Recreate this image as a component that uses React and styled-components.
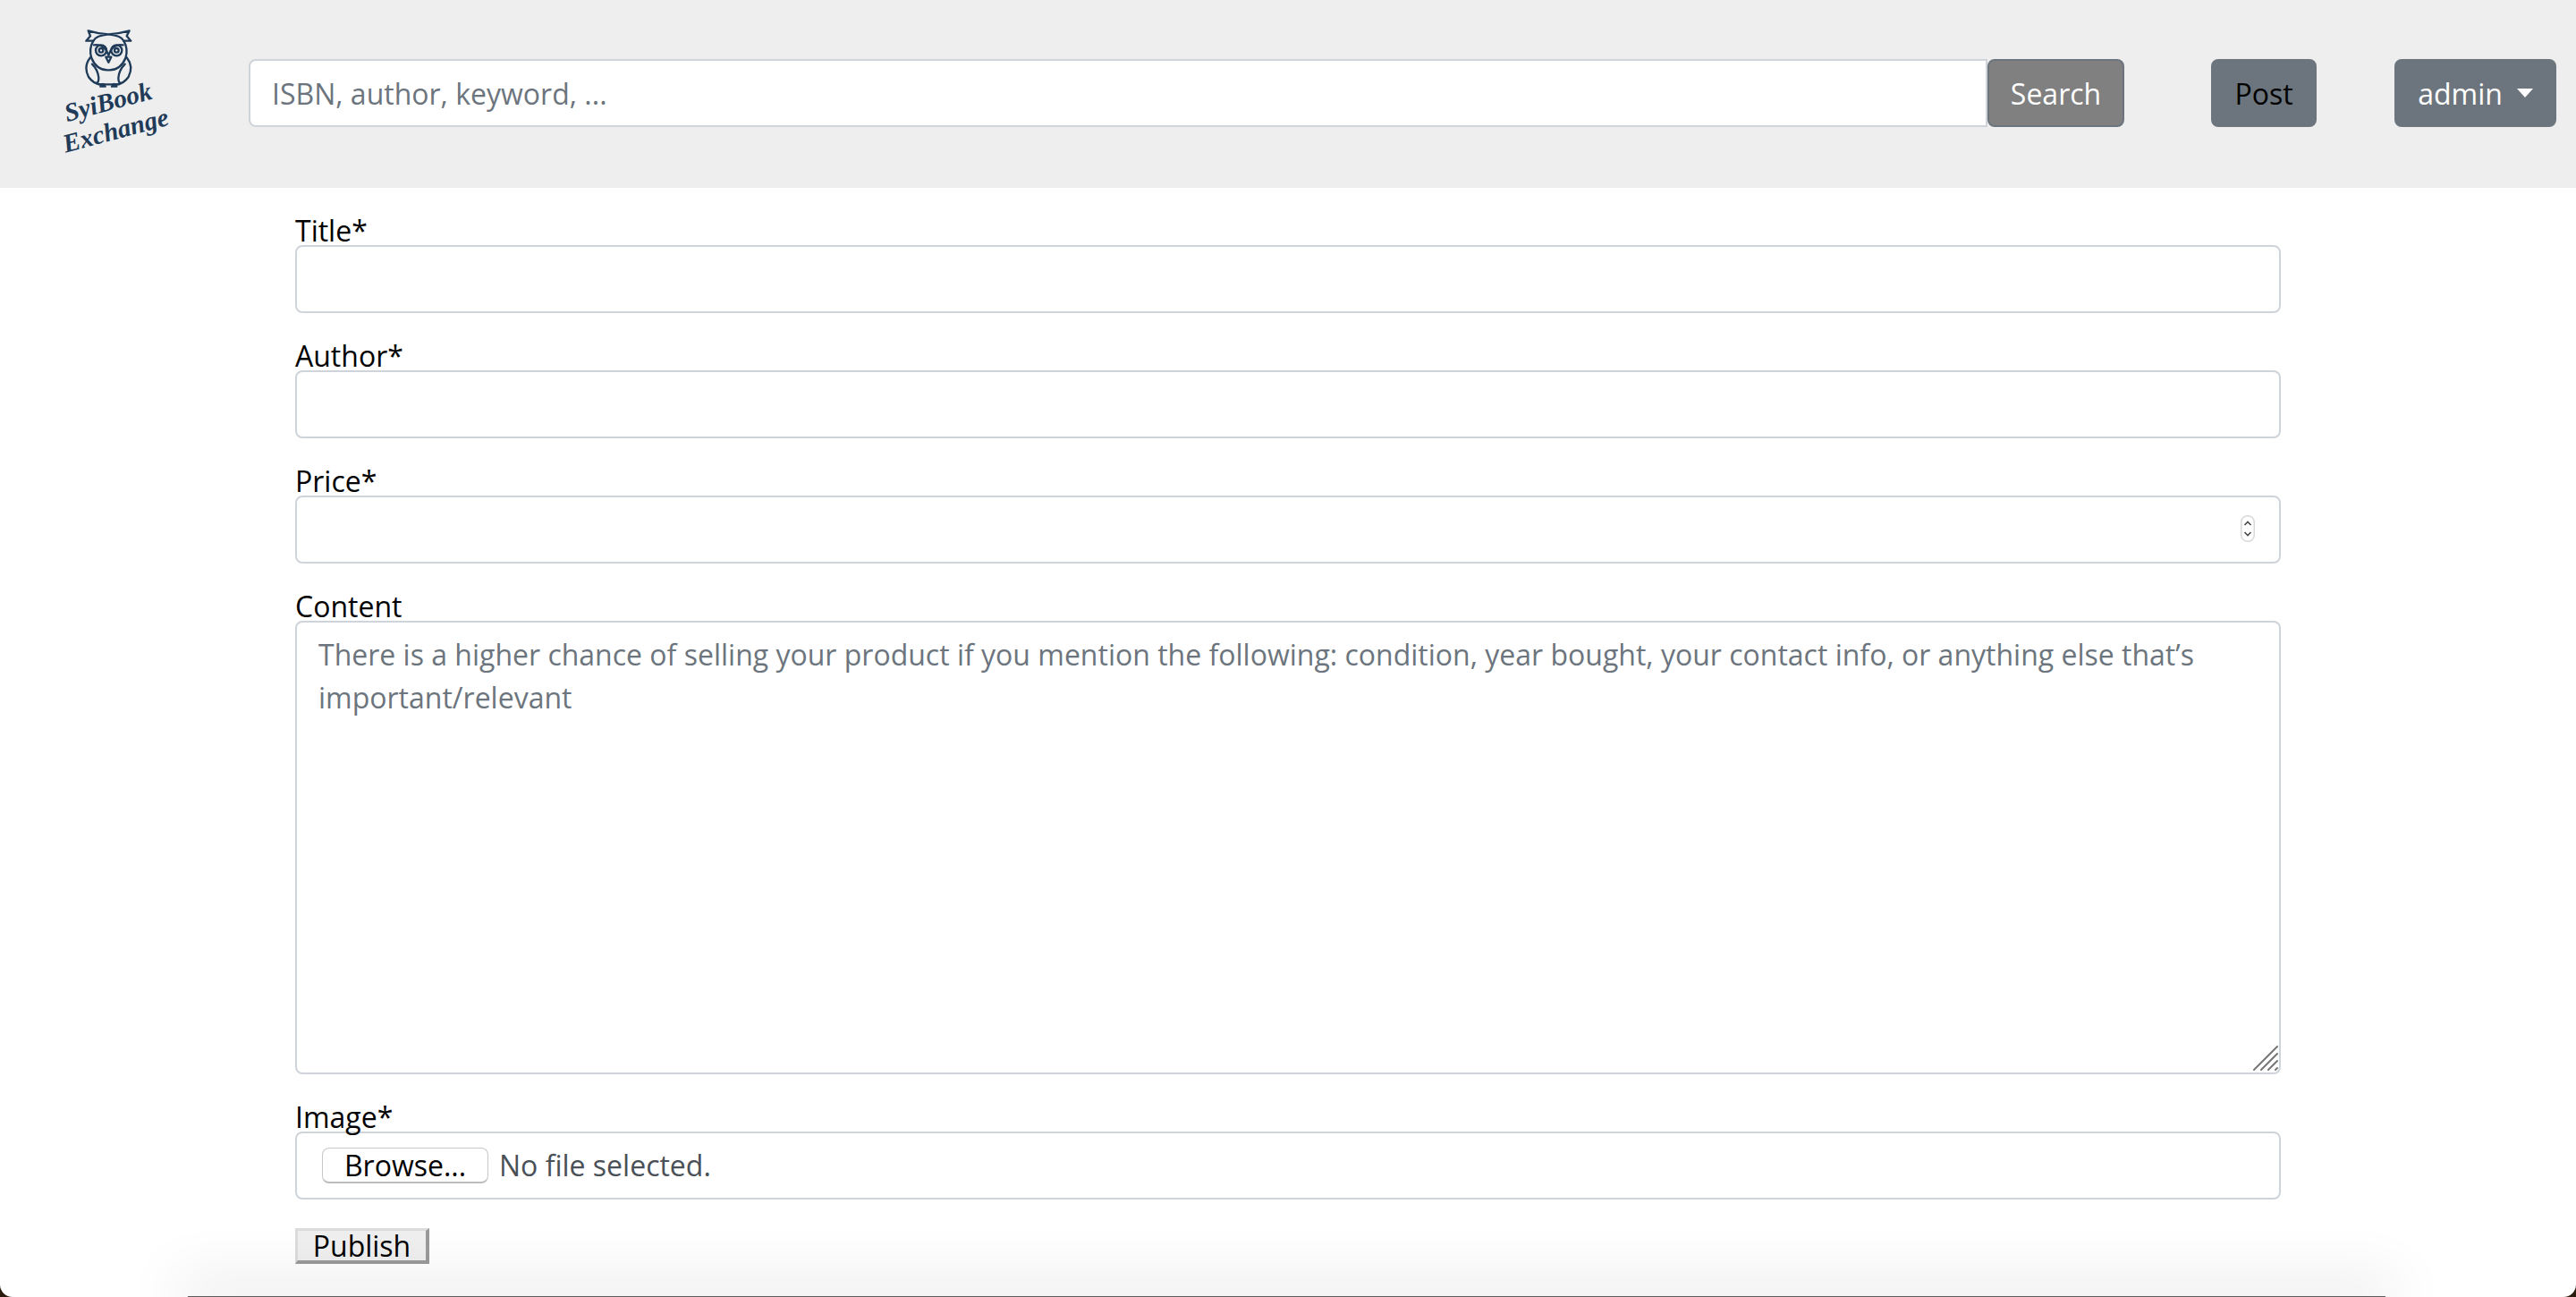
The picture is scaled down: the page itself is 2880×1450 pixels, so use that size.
import React from "react";
import styled, { createGlobalStyle } from "styled-components";

const Global = createGlobalStyle`
  html, body { margin: 0; padding: 0; background: #2b1c10; }
  body { font-family: "Open Sans", "Noto Sans", sans-serif; font-size: 32px; color: #000; }
  * { box-sizing: border-box; }
`;

const Page = styled.div`
  position: relative;
  height: 1450px;
  background: #fff;
  overflow: hidden;
  border-radius: 0 0 14px 14px;
`;

const Nav = styled.nav`
  display: flex;
  align-items: center;
  height: 210px;
  padding-bottom: 2px;
  background: #eee;
`;

const Brand = styled.div`
  width: 278px;
  height: 208px;
  flex: none;
  display: flex;
  flex-direction: column;
  padding: 31px 0 0 93px;
`;

const Owl = styled.svg`
  width: 60px;
  height: 70px;
  display: block;
  flex: none;
`;

const Wordmark = styled.div`
  width: 130px;
  margin: -4px 0 0 -33px;
  transform: rotate(-15deg);
  font-family: "Liberation Serif", serif;
  font-style: italic;
  font-weight: 700;
  font-size: 29px;
  line-height: 33px;
  text-align: center;
  color: #1f3b58;
  white-space: nowrap;
`;

const SearchInput = styled.input`
  width: 1944px;
  height: 76px;
  flex: none;
  padding: 0 24px;
  font: inherit;
  background: #fff;
  border: 2px solid #ced4da;
  border-radius: 8px 0 0 8px;
  outline: none;
  &::placeholder { color: #6c757d; opacity: 1; }
`;

const NavButton = styled.button`
  height: 76px;
  width: ${(p) => p.$w}px;
  margin-left: ${(p) => p.$ml || 0}px;
  flex: none;
  padding: 0;
  font: inherit;
  color: ${(p) => p.$fg};
  background: ${(p) => p.$bg};
  border: 2px solid #6c757d;
  border-radius: 8px;
  display: flex;
  align-items: center;
  justify-content: center;
`;

const Caret = styled.span`
  width: 0;
  height: 0;
  margin-left: 16px;
  border-top: 10px solid #fff;
  border-left: 9px solid transparent;
  border-right: 9px solid transparent;
`;

const Form = styled.form`
  width: 2220px;
  margin-left: 330px;
  padding-top: 32px;
`;

const Group = styled.div`
  margin-bottom: 32px;
`;

const Label = styled.label`
  display: block;
  height: 32px;
  line-height: 32px;
  white-space: nowrap;
`;

const FieldWrap = styled.div`
  position: relative;
`;

const Input = styled.input`
  display: block;
  width: 100%;
  height: 76px;
  padding: 0 24px;
  font: inherit;
  background: #fff;
  border: 2px solid #ced4da;
  border-radius: 8px;
  outline: none;
`;

const Spinner = styled.svg`
  position: absolute;
  right: 29px;
  top: 22px;
  width: 16px;
  height: 30px;
`;

const Textarea = styled.textarea`
  display: block;
  width: 100%;
  height: 507px;
  padding: 12px 24px;
  font: inherit;
  line-height: 48px;
  background: #fff;
  border: 2px solid #ced4da;
  border-radius: 8px;
  outline: none;
  resize: none;
  &::placeholder { color: #6c757d; opacity: 1; }
`;

const Grip = styled.svg`
  position: absolute;
  right: 3px;
  bottom: 4px;
  width: 28px;
  height: 28px;
`;

const FileBox = styled.div`
  display: flex;
  align-items: center;
  height: 76px;
  padding: 0 26px 2px 28px;
  border: 2px solid #ced4da;
  border-radius: 8px;
  color: #495057;
`;

const BrowseButton = styled.button`
  width: 186px;
  height: 40px;
  padding: 0;
  margin: 2px 12px 0 0;
  font: inherit;
  line-height: 36px;
  color: #000;
  background: #fff;
  border: 1px solid #c8c8c8;
  border-bottom: 2px solid #bcbcbc;
  border-radius: 8px;
`;

const Publish = styled.button`
  display: block;
  width: 150px;
  height: 40px;
  padding: 0;
  font: inherit;
  line-height: 32px;
  color: #000;
  background: #efefef;
  border-style: solid;
  border-width: 3px 4px 4px 3px;
  border-color: #dcdcdc #9a9a9a #9a9a9a #dcdcdc;
`;

const BottomEdge = styled.div`
  position: absolute;
  left: 210px;
  right: 213px;
  bottom: 0;
  height: 1px;
  background: #5a5a5a;
  box-shadow: 0 -4px 64px 12px rgba(0, 0, 0, 0.13);
`;

const OwlMark = () => (
  <Owl viewBox="0 0 180 210" fill="none" stroke="#1f3b58" strokeWidth="7" strokeLinecap="round" strokeLinejoin="round">
    <path d="M17 10 Q50 20 85 22 Q120 20 155 10 L146 28 L160 44 L136 44 Q128 26 85 22 Q42 26 34 44 L10 44 L24 28 Z" />
    <path d="M34 44 Q18 72 28 102 Q46 144 85 142 Q124 144 142 102 Q152 72 136 44" />
    <path d="M85 92 Q72 52 36 58" />
    <path d="M85 92 Q98 52 134 58" />
    <circle cx="60" cy="76" r="18" />
    <circle cx="60" cy="76" r="7" />
    <circle cx="112" cy="76" r="18" />
    <circle cx="112" cy="76" r="7" />
    <path d="M76 98 L94 98 L85 116 Z" />
    <path d="M24 100 Q0 130 18 165 Q34 188 58 190" />
    <path d="M146 100 Q170 130 152 165 Q136 188 112 190" />
    <path d="M30 122 Q50 142 52 168 Q52 184 44 186 M140 122 Q120 142 118 168 Q118 184 126 186" />
    <path d="M52 190 L120 190" />
    <path d="M58 197 Q66 181 74 197 Z M96 197 Q104 181 112 197 Z" />
  </Owl>
);

export default function App() {
  return (
    <Page>
      <Global />
      <Nav>
        <Brand>
          <OwlMark />
          <Wordmark>
            <div>SyiBook</div>
            <div>Exchange</div>
          </Wordmark>
        </Brand>
        <SearchInput placeholder="ISBN, author, keyword, ..." />
        <NavButton $w={153} $bg="#808080" $fg="#fff">Search</NavButton>
        <NavButton $w={118} $ml={97} $bg="#6c757d" $fg="#000">Post</NavButton>
        <NavButton $w={181} $ml={87} $bg="#6c757d" $fg="#fff">admin<Caret /></NavButton>
      </Nav>
      <Form>
        <Group>
          <Label>Title*</Label>
          <Input />
        </Group>
        <Group>
          <Label>Author*</Label>
          <Input />
        </Group>
        <Group>
          <Label>Price*</Label>
          <FieldWrap>
            <Input />
            <Spinner viewBox="0 0 16 30" fill="none">
              <rect x="0.75" y="0.75" width="14.5" height="28.5" rx="7" fill="#fff" stroke="#d8d8d8" strokeWidth="1.5" />
              <path d="M4.5 11 L8 7.5 L11.5 11 M4.5 19 L8 22.5 L11.5 19" stroke="#4a4a4a" strokeWidth="1.6" />
            </Spinner>
          </FieldWrap>
        </Group>
        <Group>
          <Label>Content</Label>
          <FieldWrap>
            <Textarea placeholder="There is a higher chance of selling your product if you mention the following: condition, year bought, your contact info, or anything else that’s important/relevant" />
            <Grip viewBox="0 0 28 28" stroke="#777" strokeWidth="2" strokeLinecap="round">
              <path d="M1 27 L27 1 M9 27 L27 9 M17 27 L27 17 M25 27 L27 25" />
            </Grip>
          </FieldWrap>
        </Group>
        <Group>
          <Label>Image*</Label>
          <FileBox>
            <BrowseButton type="button">Browse...</BrowseButton>
            No file selected.
          </FileBox>
        </Group>
        <Publish type="button">Publish</Publish>
      </Form>
      <BottomEdge />
    </Page>
  );
}
